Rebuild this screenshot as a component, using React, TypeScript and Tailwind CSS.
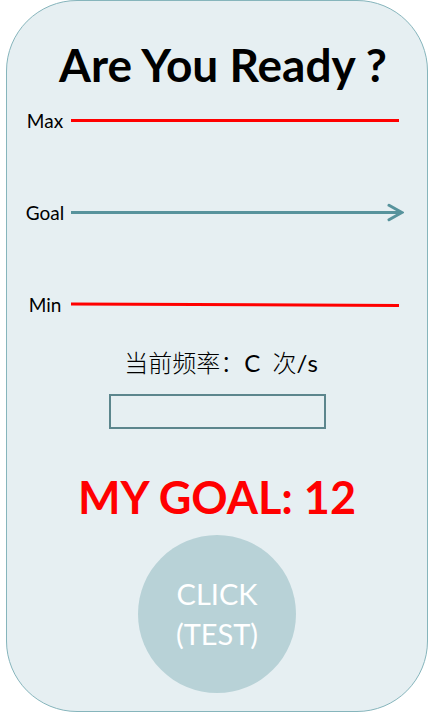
function ScaleLine({ y1, y2 }: { y1: number; y2: number }) {
  return (
    <svg className="mr-[5px] h-5 min-w-0 flex-1" viewBox="0 0 328 20" preserveAspectRatio="none" aria-hidden="true">
      <line x1="0" y1={y1} x2="328" y2={y2} stroke="#ff0000" strokeWidth="3" />
    </svg>
  );
}

function GoalArrow() {
  return (
    <div className="flex min-w-0 flex-1 items-center" aria-hidden="true">
      <svg className="h-5 min-w-0 flex-1" viewBox="0 0 313 20" preserveAspectRatio="none">
        <line x1="0" y1="9.5" x2="313" y2="9.5" stroke="#57939c" strokeWidth="3" />
      </svg>
      <svg className="h-5 w-5" viewBox="0 0 20 20" fill="none" stroke="#57939c" strokeWidth="3">
        <path d="M0 9.5H17" />
        <path d="M5 2.3L17.8 9.5L5 16.7" strokeLinecap="round" />
      </svg>
    </div>
  );
}

const label = "w-10 text-center text-[19px] leading-5";

export default function App() {
  return (
    <main className="mx-1.5 flex flex-col items-center rounded-[71px] border border-[#86b5bc] bg-[#e6eff2] pt-[34px] pb-[18px] font-['Lato','Noto_Sans_CJK_SC',sans-serif] text-black">
      <h1 className="pl-3 text-[46px] leading-[60px] font-bold whitespace-nowrap">Are You Ready ?</h1>

      <section className="mt-4 flex w-full flex-col gap-[72px] pr-[23px] pl-[18px]">
        <div className="flex items-center gap-1.5">
          <span className={label}>Max</span>
          <ScaleLine y1={9.5} y2={9.5} />
        </div>
        <div className="flex items-center gap-1.5">
          <span className={label}>Goal</span>
          <GoalArrow />
        </div>
        <div className="flex items-center gap-1.5">
          <span className={label}>Min</span>
          <ScaleLine y1={9} y2={10.5} />
        </div>
      </section>

      <label htmlFor="rate" className="mt-[30px] pl-2 text-2xl leading-9 font-light whitespace-pre">
        当前频率：<span className="font-normal">C  </span>次<span className="font-normal">/s</span>
      </label>
      <input
        id="rate"
        type="text"
        className="mt-[13px] h-[35px] w-[217px] border-2 border-[#5c868d] bg-transparent px-2 text-lg outline-none"
      />

      <p className="mt-[38px] text-[45px] leading-[60px] font-bold whitespace-nowrap text-[#ff0000]">MY GOAL: 12</p>

      <button
        type="button"
        className="mt-2 flex size-[158px] flex-col items-center justify-center rounded-full bg-[#b8d2d7] text-[29px] leading-10 text-white"
      >
        <span>CLICK</span>
        <span>(TEST)</span>
      </button>
    </main>
  );
}
